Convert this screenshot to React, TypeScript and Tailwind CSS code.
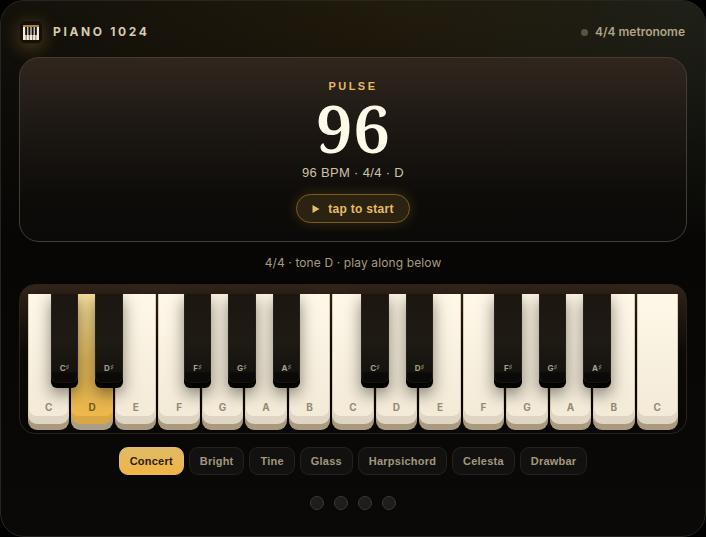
import { useState } from "react";
import clsx from "clsx";

const WHITE_KEYS = ["C", "D", "E", "F", "G", "A", "B", "C", "D", "E", "F", "G", "A", "B", "C"];

// slot is the index of the white key on the left of the black one
const BLACK_KEYS = [
  { note: "C", slot: 0 },
  { note: "D", slot: 1 },
  { note: "F", slot: 3 },
  { note: "G", slot: 4 },
  { note: "A", slot: 5 },
  { note: "C", slot: 7 },
  { note: "D", slot: 8 },
  { note: "F", slot: 10 },
  { note: "G", slot: 11 },
  { note: "A", slot: 12 },
];

const VOICES = ["Concert", "Bright", "Tine", "Glass", "Harpsichord", "Celesta", "Drawbar"];

function Logo() {
  return (
    <span className="flex size-6 items-center justify-center rounded-md border border-[#2a2010] bg-[#12100d] shadow-[0_4px_18px_rgba(224,170,60,0.3)]">
      <svg width="18" height="18" viewBox="0 0 18 18" className="shrink-0" aria-hidden="true">
        <rect x="1" y="2" width="16" height="2" fill="#a87f35" />
        <rect x="1" y="4" width="16" height="13" fill="#f3ecd8" />
        <path d="M4.2 4v13M7.4 4v13M10.6 4v13M13.8 4v13" stroke="#4a4336" strokeWidth="0.7" />
        <path d="M3.2 4h2v8h-2zM6.4 4h2v8h-2zM9.6 4h2v8h-2zM12.8 4h2v8h-2z" fill="#15120e" />
      </svg>
    </span>
  );
}

function Header() {
  return (
    <header className="flex h-[26px] items-center justify-between pr-0.5">
      <div className="flex items-center gap-2.5">
        <Logo />
        <h1 className="text-[12px] font-bold tracking-[0.22em] text-[#d6cbb3]">PIANO 1024</h1>
      </div>
      <div className="flex items-center gap-[7px] text-[12px] font-semibold text-[#b0a386]">
        <span className="size-[7px] rounded-full bg-[#5b5240]" />
        4/4 metronome
      </div>
    </header>
  );
}

function PulseCard({ tone }: { tone: string }) {
  return (
    <section className="flex flex-col items-center rounded-[20px] border border-[#433d35] bg-[linear-gradient(180deg,#30261e_0%,#1c1713_40%,#0e0c09_75%,#0b0a08_100%)] pt-5 pb-[18px] font-['Liberation_Sans',sans-serif]">
      <h2 className="text-[11px] leading-4 font-bold tracking-[0.22em] text-[#e3bb62]">PULSE</h2>
      <p className="mt-1 font-['Noto_Serif','Liberation_Serif',serif] text-[66px] leading-[58px] font-semibold text-[#fff9ea]">
        96
      </p>
      <p className="mt-[7px] text-[13px] leading-5 tracking-wide text-[#cdc2aa]">
        96 BPM · 4/4 · {tone}
      </p>
      <button
        type="button"
        className="mt-[11px] flex h-[29px] items-center gap-2 rounded-full border border-[#7c5c20] bg-[#2b2212] px-[15px] text-[12px] font-bold tracking-wide text-[#e6bd66] shadow-[0_0_14px_rgba(224,170,60,0.2)]"
      >
        <svg width="8" height="8" viewBox="0 0 8 8" aria-hidden="true">
          <path d="M0.5 0 7.5 4 0.5 8z" fill="currentColor" />
        </svg>
        tap to start
      </button>
    </section>
  );
}

type KeyboardProps = {
  active: number;
  onPlay: (index: number) => void;
};

function Keyboard({ active, onPlay }: KeyboardProps) {
  return (
    <section className="rounded-2xl border border-[#2a231b] bg-[linear-gradient(180deg,#32241a_0%,#2a1e15_8%,#0c0a07_45%,#080705_100%)] px-2 pt-[9px] pb-[3px]">
      <div className="relative flex gap-0.5">
        {WHITE_KEYS.map((note, index) => (
          <button
            key={index}
            type="button"
            onClick={() => onPlay(index)}
            className={clsx(
              "h-[136px] min-w-0 flex-1 rounded-b-[9px] pb-1.5",
              index === active ? "bg-[#a99e88]" : "bg-[#a99a7f]"
            )}
          >
            <span
              className={clsx(
                "block h-full rounded-b-[9px] pb-2",
                index === active ? "bg-[#d9a744]" : "bg-[#dfd5c2]"
              )}
            >
              <span
                className={clsx(
                  "flex h-full items-end justify-center rounded-b-[7px] pb-[1px] text-[10px] leading-4 font-bold",
                  index === active
                    ? "bg-[linear-gradient(180deg,#f8e3a0_0%,#e3b95c_55%,#edb74b_100%)] text-[#7a5a1c]"
                    : "bg-[linear-gradient(180deg,#fff8e8_0%,#f3ead8_100%)] text-[#978b76] shadow-[inset_1px_0_0_#d8ccb4,inset_-1px_0_0_#d8ccb4]"
                )}
              >
                {note}
              </span>
            </span>
          </button>
        ))}
        {BLACK_KEYS.map(({ note, slot }) => (
          <button
            key={slot}
            type="button"
            style={{ left: `${3.5 + slot * 6.825}%` }}
            className="absolute top-0 h-[94px] w-[4.25%] rounded-b-md bg-[#030302] pb-[5px] shadow-[0_6px_16px_rgba(20,15,8,0.5)]"
          >
            <span className="flex h-full items-end justify-center rounded-b-md border-x border-b border-[#24211c] border-b-[#151310] bg-[linear-gradient(180deg,#1b1610_0%,#1f1b14_50%,#15130f_88%,#0b0a08_90%)] pb-2 text-[8px] leading-3 font-bold text-[#aba08a]">
              {note}
              <span className="font-['DejaVu_Sans',sans-serif]">♯</span>
            </span>
          </button>
        ))}
      </div>
    </section>
  );
}

export default function App() {
  const [activeKey, setActiveKey] = useState(1);
  const [voice, setVoice] = useState("Concert");
  const tone = WHITE_KEYS[activeKey];

  return (
    <div className="min-h-screen bg-black font-[Inter,sans-serif]">
      <main className="flex min-h-screen flex-col gap-3 rounded-3xl border border-[#262522] bg-[radial-gradient(ellipse_60%_40%_at_55%_0%,rgba(56,42,12,0.4),transparent),radial-gradient(ellipse_50%_45%_at_100%_0%,rgba(38,46,40,0.5),transparent),linear-gradient(180deg,#12100b_0%,#070604_45%,#0a0907_100%)] p-[18px]">
        <Header />
        <PulseCard tone={tone} />
        <p className="text-center text-[12px] leading-[18px] tracking-[0.01em] text-[#a59a83]">
          4/4 · tone {tone} · play along below
        </p>
        <Keyboard active={activeKey} onPlay={setActiveKey} />
        <div className="flex flex-wrap justify-center gap-[5px] pt-px font-['Liberation_Sans',sans-serif]">
          {VOICES.map((name) => (
            <button
              key={name}
              type="button"
              onClick={() => setVoice(name)}
              className={clsx(
                "h-7 rounded-[9px] border px-2.5 text-[11px] font-bold tracking-[0.02em]",
                name === voice
                  ? "border-[#e6bd66] bg-[linear-gradient(180deg,#e0bb68,#f1b444)] text-[#2a1d08]"
                  : "border-[#24221e] bg-[#12110f] text-[#a3977e]"
              )}
            >
              {name}
            </button>
          ))}
        </div>
        <div className="flex justify-center gap-2.5 pt-[9px]">
          {[0, 1, 2, 3].map((beat) => (
            <span key={beat} className="size-3.5 rounded-full border border-[#3a3937] bg-[#1e1d1b]" />
          ))}
        </div>
      </main>
    </div>
  );
}
